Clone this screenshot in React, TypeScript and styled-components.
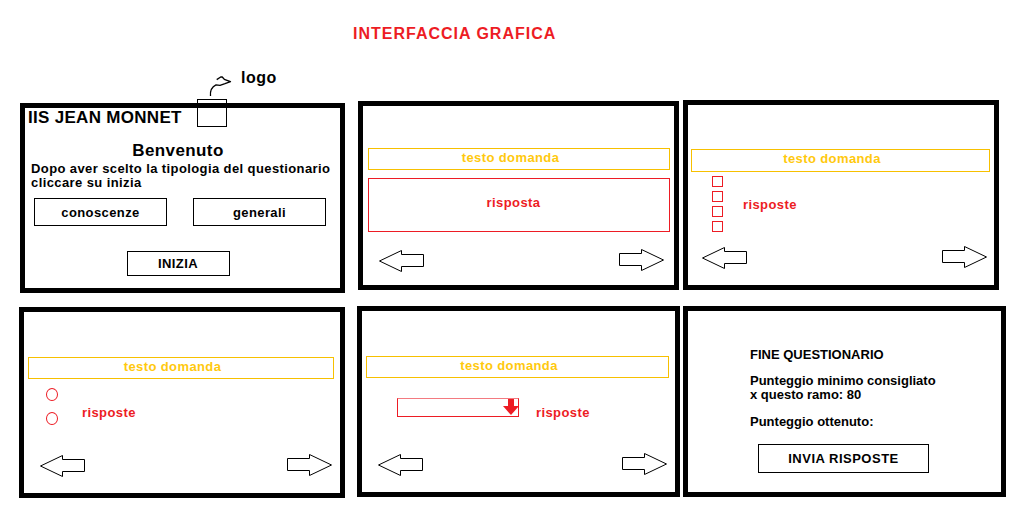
import React from "react";
import styled, { createGlobalStyle } from "styled-components";

const RED = "#ED1C24";
const GOLD = "#FFC90E";

const GlobalStyle = createGlobalStyle`
  html, body { margin: 0; padding: 0; background: #ffffff; }
  body {
    font-family: "Liberation Sans", Arial, sans-serif;
    font-weight: 700;
    color: #000000;
  }
  * { box-sizing: border-box; }
`;

const Page = styled.div`
  width: 1024px;
  height: 515px;
  padding-top: 25px;
  overflow: hidden;
`;

const Title = styled.h1`
  margin: 0;
  padding-left: 353px;
  font-size: 16px;
  line-height: 18px;
  letter-spacing: 1px;
  font-weight: 700;
  color: ${RED};
`;

const LogoRow = styled.div`
  display: flex;
  align-items: flex-start;
  gap: 8px;
  height: 31px;
  margin-top: 26px;
  padding-left: 207px;
`;

const LogoLabel = styled.span`
  font-size: 16px;
  line-height: 18px;
  letter-spacing: 0.5px;
`;

const HandArrow = styled.svg`
  flex: none;
  margin-top: 6px;
`;

const PanelRow = styled.div<{ $mt?: number }>`
  display: flex;
  align-items: flex-start;
  margin-top: ${(p) => p.$mt ?? 0}px;
`;

const Panel = styled.section<{ $x: number; $y: number; $w: number; $h: number }>`
  position: relative;
  flex: none;
  display: flex;
  flex-direction: column;
  width: ${(p) => p.$w}px;
  height: ${(p) => p.$h}px;
  margin-left: ${(p) => p.$x}px;
  margin-top: ${(p) => p.$y}px;
  border: 5px solid #000;
  background: #fff;
`;

const LogoBox = styled.div`
  position: absolute;
  left: 172px;
  top: -9px;
  width: 30px;
  height: 28px;
  border: 1px solid #000;
`;

/* ---------- Panel 1 ---------- */
const SchoolName = styled.h2`
  margin: 0;
  padding-left: 3px;
  font-size: 17px;
  line-height: 19px;
  letter-spacing: 0.3px;
  font-weight: 700;
`;

const Welcome = styled.h3`
  margin: 14px 0 0;
  padding-right: 9px;
  text-align: center;
  font-size: 17px;
  line-height: 19px;
  letter-spacing: 0.4px;
  font-weight: 700;
`;

const Intro = styled.p`
  margin: 2px 0 0;
  padding-left: 6px;
  font-size: 13px;
  line-height: 14px;
  letter-spacing: 0.4px;
`;

const TypeRow = styled.div`
  display: flex;
  gap: 26px;
  margin: 8px 0 0 9px;
`;

const OutlineButton = styled.button<{ $w: number; $h: number }>`
  width: ${(p) => p.$w}px;
  height: ${(p) => p.$h}px;
  padding: 0;
  border: 1px solid #000;
  background: #fff;
  color: #000;
  font-family: inherit;
  font-weight: 700;
  font-size: 13px;
  letter-spacing: 0.4px;
`;

const StartWrap = styled.div`
  display: flex;
  justify-content: center;
  padding-right: 9px;
  margin-top: 25px;
`;

/* ---------- Question panels ---------- */
const QuestionBox = styled.div<{ $top: number; $l: number; $r: number; $h?: number }>`
  margin: ${(p) => p.$top}px ${(p) => p.$r}px 0 ${(p) => p.$l}px;
  height: ${(p) => p.$h ?? 22}px;
  padding: 1px 17px 0 0;
  border: 1px solid #F7C000;
  color: ${GOLD};
  text-align: center;
  font-size: 13px;
  line-height: 15px;
  letter-spacing: 0.4px;
`;

const AnswerBox = styled.div`
  margin: 8px 4px 0 5px;
  height: 54px;
  padding: 16px 11px 0 0;
  border: 1px solid ${RED};
  color: ${RED};
  text-align: center;
  font-size: 13px;
  line-height: 15px;
  letter-spacing: 0.4px;
`;

const ChoiceArea = styled.div<{ $l: number; $t: number; $gap: number }>`
  display: flex;
  align-items: flex-start;
  gap: ${(p) => p.$gap}px;
  margin: ${(p) => p.$t}px 0 0 ${(p) => p.$l}px;
`;

const Stack = styled.div<{ $gap: number }>`
  display: flex;
  flex-direction: column;
  gap: ${(p) => p.$gap}px;
`;

const CheckBox = styled.span`
  display: block;
  width: 11px;
  height: 11px;
  border: 1px solid ${RED};
`;

const Radio = styled.span`
  display: block;
  width: 12px;
  height: 13px;
  border: 1px solid ${RED};
  border-radius: 50%;
`;

const AnswerLabel = styled.span<{ $mt: number }>`
  margin-top: ${(p) => p.$mt}px;
  color: ${RED};
  font-size: 13px;
  line-height: 15px;
  letter-spacing: 0.4px;
`;

const Dropdown = styled.div`
  display: flex;
  justify-content: flex-end;
  width: 122px;
  height: 19px;
  border: 1px solid ${RED};
  border-top-color: #F37A80;
`;

const DropArrow = styled.svg`
  display: block;
  margin-right: -1px;
  flex: none;
`;

const Nav = styled.div<{ $l: number; $r: number; $b: number }>`
  display: flex;
  justify-content: space-between;
  align-items: flex-end;
  margin-top: auto;
  padding: 0 ${(p) => p.$r}px ${(p) => p.$b}px ${(p) => p.$l}px;
`;

const ArrowSvg = styled.svg<{ $flip?: boolean; $lift?: number }>`
  display: block;
  flex: none;
  transform: ${(p) => (p.$flip ? "scaleX(-1)" : "none")};
  margin-bottom: ${(p) => p.$lift ?? 0}px;
`;

/* ---------- Panel 6 ---------- */
const EndContent = styled.div`
  display: flex;
  flex-direction: column;
  align-items: flex-start;
  padding-left: 62px;
`;

const EndTitle = styled.div`
  margin-top: 36px;
  font-size: 13px;
  line-height: 15px;
`;

const EndText = styled.p<{ $mt: number }>`
  margin: ${(p) => p.$mt}px 0 0;
  font-size: 13px;
  line-height: 14px;
`;

const SendButton = styled.button`
  margin: 15px 0 0 8px;
  width: 171px;
  height: 29px;
  padding: 0;
  border: 1px solid #000;
  background: #fff;
  color: #000;
  font-family: inherit;
  font-weight: 700;
  font-size: 13px;
  letter-spacing: 0.5px;
`;

function NavArrow({ flip, lift }: { flip?: boolean; lift?: number }) {
  return (
    <ArrowSvg $flip={flip} $lift={lift} width={45} height={22} viewBox="0 0 45 22">
      <polygon
        points="0.5,11 22.5,0.5 22.5,4.5 44.5,4.5 44.5,16.5 22.5,16.5 22.5,21.5"
        fill="#fff"
        stroke="#000"
        strokeWidth={1}
      />
    </ArrowSvg>
  );
}

function NavBar({ l, r, b }: { l: number; r: number; b: number }) {
  return (
    <Nav $l={l} $r={r} $b={b}>
      <NavArrow />
      <NavArrow flip lift={1} />
    </Nav>
  );
}

export default function App() {
  return (
    <>
      <GlobalStyle />
      <Page>
        <Title>INTERFACCIA GRAFICA</Title>
        <LogoRow>
          <HandArrow width={26} height={22} viewBox="0 0 26 22">
            <path
              d="M3.5 21 C3 16, 4.5 12, 9 9.8 L13 10.3 L18 8.7 L23.5 6.7 L17.3 4.3 L15 1.8 L13.7 2 L9.7 4.6"
              fill="none"
              stroke="#000"
              strokeWidth={1.3}
              strokeLinejoin="round"
            />
          </HandArrow>
          <LogoLabel>logo</LogoLabel>
        </LogoRow>

        <PanelRow>
          <Panel $x={20} $y={3} $w={325} $h={190}>
            <LogoBox />
            <SchoolName>IIS JEAN MONNET</SchoolName>
            <Welcome>Benvenuto</Welcome>
            <Intro>
              Dopo aver scelto la tipologia del questionario
              <br />
              cliccare su inizia
            </Intro>
            <TypeRow>
              <OutlineButton $w={133} $h={28}>conoscenze</OutlineButton>
              <OutlineButton $w={133} $h={28}>generali</OutlineButton>
            </TypeRow>
            <StartWrap>
              <OutlineButton $w={103} $h={25}>INIZIA</OutlineButton>
            </StartWrap>
          </Panel>

          <Panel $x={13} $y={1} $w={321} $h={189}>
            <QuestionBox $top={42} $l={5} $r={4}>testo domanda</QuestionBox>
            <AnswerBox>risposta</AnswerBox>
            <NavBar l={16} r={10} b={13} />
          </Panel>

          <Panel $x={4} $y={0} $w={316} $h={190}>
            <QuestionBox $top={44} $l={3} $r={4} $h={23}>testo domanda</QuestionBox>
            <ChoiceArea $l={24} $t={4} $gap={20}>
              <Stack $gap={4}>
                <CheckBox />
                <CheckBox />
                <CheckBox />
                <CheckBox />
              </Stack>
              <AnswerLabel $mt={21}>risposte</AnswerLabel>
            </ChoiceArea>
            <NavBar l={14} r={7} b={16} />
          </Panel>
        </PanelRow>

        <PanelRow $mt={13}>
          <Panel $x={19} $y={1} $w={326} $h={191}>
            <QuestionBox $top={45} $l={4} $r={6}>testo domanda</QuestionBox>
            <ChoiceArea $l={22} $t={9} $gap={24}>
              <Stack $gap={11}>
                <Radio />
                <Radio />
              </Stack>
              <AnswerLabel $mt={17}>risposte</AnswerLabel>
            </ChoiceArea>
            <NavBar l={16} r={8} b={16} />
          </Panel>

          <Panel $x={12} $y={0} $w={323} $h={191}>
            <QuestionBox $top={45} $l={4} $r={6}>testo domanda</QuestionBox>
            <ChoiceArea $l={35} $t={20} $gap={17}>
              <Dropdown>
                <DropArrow width={16} height={16} viewBox="0 0 16 16">
                  <rect x={5} y={0} width={6} height={8} fill={RED} />
                  <polygon points="0,7 16,7 8,16" fill={RED} />
                </DropArrow>
              </Dropdown>
              <AnswerLabel $mt={7}>risposte</AnswerLabel>
            </ChoiceArea>
            <NavBar l={16} r={8} b={16} />
          </Panel>

          <Panel $x={3} $y={0} $w={323} $h={191}>
            <EndContent>
              <EndTitle>FINE QUESTIONARIO</EndTitle>
              <EndText $mt={12}>
                Punteggio minimo consigliato
                <br />x questo ramo: 80
              </EndText>
              <EndText $mt={13}>Punteggio ottenuto:</EndText>
              <SendButton>INVIA RISPOSTE</SendButton>
            </EndContent>
          </Panel>
        </PanelRow>
      </Page>
    </>
  );
}
